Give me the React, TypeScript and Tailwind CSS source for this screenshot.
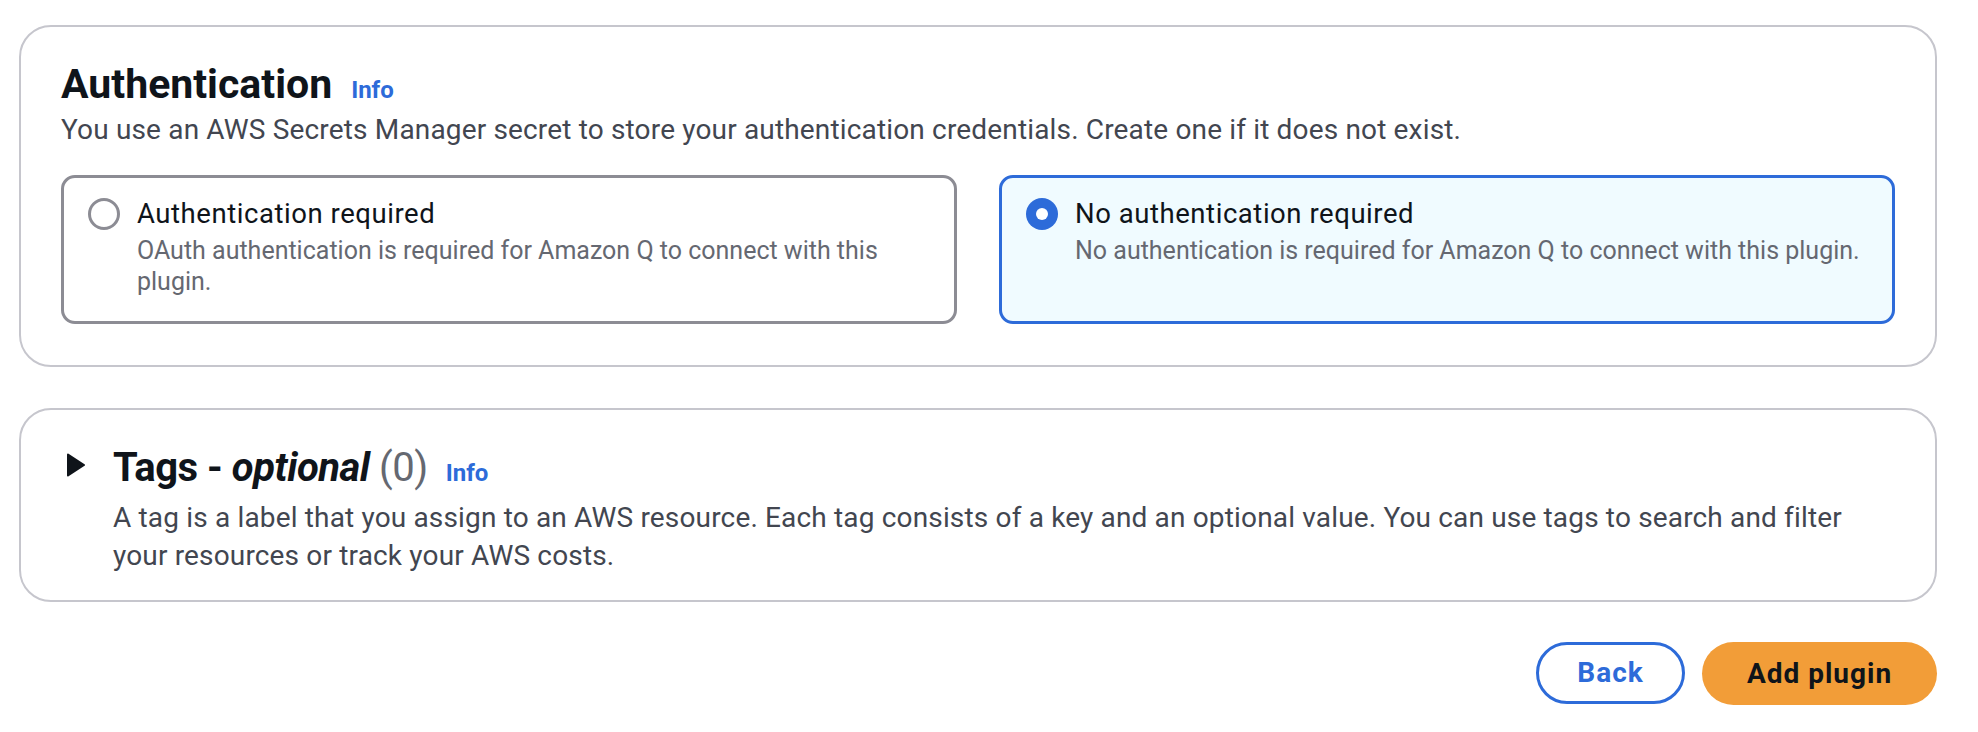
const Radio = (props: { checked: boolean }) => props.checked ?
    <svg width="32" height="32" viewBox="0 0 32 32" className="shrink-0">
        <circle cx="16" cy="16" r="16" fill="#2d6bd9" />
        <circle cx="16" cy="16" r="6" fill="#ffffff" />
    </svg> :
    <svg width="32" height="32" viewBox="0 0 32 32" className="shrink-0">
        <circle cx="16" cy="16" r="14.5" fill="#ffffff" stroke="#8c8c94" strokeWidth="3" />
    </svg>

const Tile = (props: { checked: boolean, label: string, children: React.ReactNode }) => {
    const { checked, label, children } = props
    return <div className={checked
        ? "flex gap-[17px] rounded-[14px] border-[3px] border-[#2d6bd9] bg-[#f0fbff] pl-6 pr-6 pt-5 pb-[24px]"
        : "flex gap-[17px] rounded-[14px] border-[3px] border-[#8c8c94] bg-white pl-6 pr-6 pt-5 pb-[24px]"}>
        <Radio checked={checked} />
        <div>
            <div className="text-[27.5px] leading-[32px] tracking-[0.55px] text-[#0f141a]">{label}</div>
            <div className="mt-[5px] text-[25px] leading-[31px] text-[#656871]">{children}</div>
        </div>
    </div>
}

const App = () => {
    return <div className="w-[1978px] h-[732px] bg-white pt-[25px] pl-[19px] pr-[41px] font-['Roboto',sans-serif]">
        <div className="border-2 border-[#c6c6cd] rounded-[32px] pt-[33px] px-10 pb-[41px]">
            <div className="flex items-baseline">
                <h2 className="text-[41px] leading-[48px] font-bold text-[#0f141a]">Authentication</h2>
                <a className="ml-[19px] text-[24px] font-bold text-[#2d6bd9]">Info</a>
            </div>
            <p className="mt-[2px] text-[28px] leading-[40px] tracking-[0.16px] text-[#424650]">
                You use an AWS Secrets Manager secret to store your authentication credentials. Create one if it does not exist.
            </p>
            <div className="mt-[25px] grid grid-cols-2 gap-[42px]">
                <Tile checked={false} label="Authentication required">
                    OAuth authentication is required for Amazon Q to connect with this<br />plugin.
                </Tile>
                <Tile checked={true} label="No authentication required">
                    No authentication is required for Amazon Q to connect with this plugin.
                </Tile>
            </div>
        </div>

        <div className="mt-[41px] border-2 border-[#c6c6cd] rounded-[32px] pt-[34px] px-10 pb-[25px] grid grid-cols-[24px_1fr] gap-x-7">
            <svg width="24" height="24" viewBox="0 0 24 24" className="mt-[9px]">
                <polygon points="7,1.5 23,12 7,22.5" fill="#0f141a" stroke="#0f141a" strokeWidth="2" strokeLinejoin="round" />
            </svg>
            <div>
                <h2 className="text-[40px] leading-[48px] font-bold text-[#0f141a]">
                    <span className="tracking-[-0.5px]">Tags - <i>optional</i> <span className="font-normal text-[#656871]">(0)</span></span>
                    <a className="ml-[18px] text-[24px] text-[#2d6bd9]">Info</a>
                </h2>
                <p className="mt-[2px] text-[28px] leading-[38px] tracking-[0.16px] text-[#424650]">
                    A tag is a label that you assign to an AWS resource. Each tag consists of a key and an optional value. You can use tags to search and filter<br />your resources or track your AWS costs.
                </p>
            </div>
        </div>

        <div className="mt-[40px] flex justify-end gap-[17px]">
            <button className="h-[62px] w-[149px] rounded-full border-[3px] border-[#2d6bd9] text-[28px] tracking-[1px] font-bold text-[#2d6bd9] flex items-center justify-center">Back</button>
            <button className="h-[63px] w-[235px] rounded-full bg-[#f29d38] text-[28px] tracking-[1px] font-bold text-[#0f141a] flex items-center justify-center">Add plugin</button>
        </div>
    </div>
}

export default App
